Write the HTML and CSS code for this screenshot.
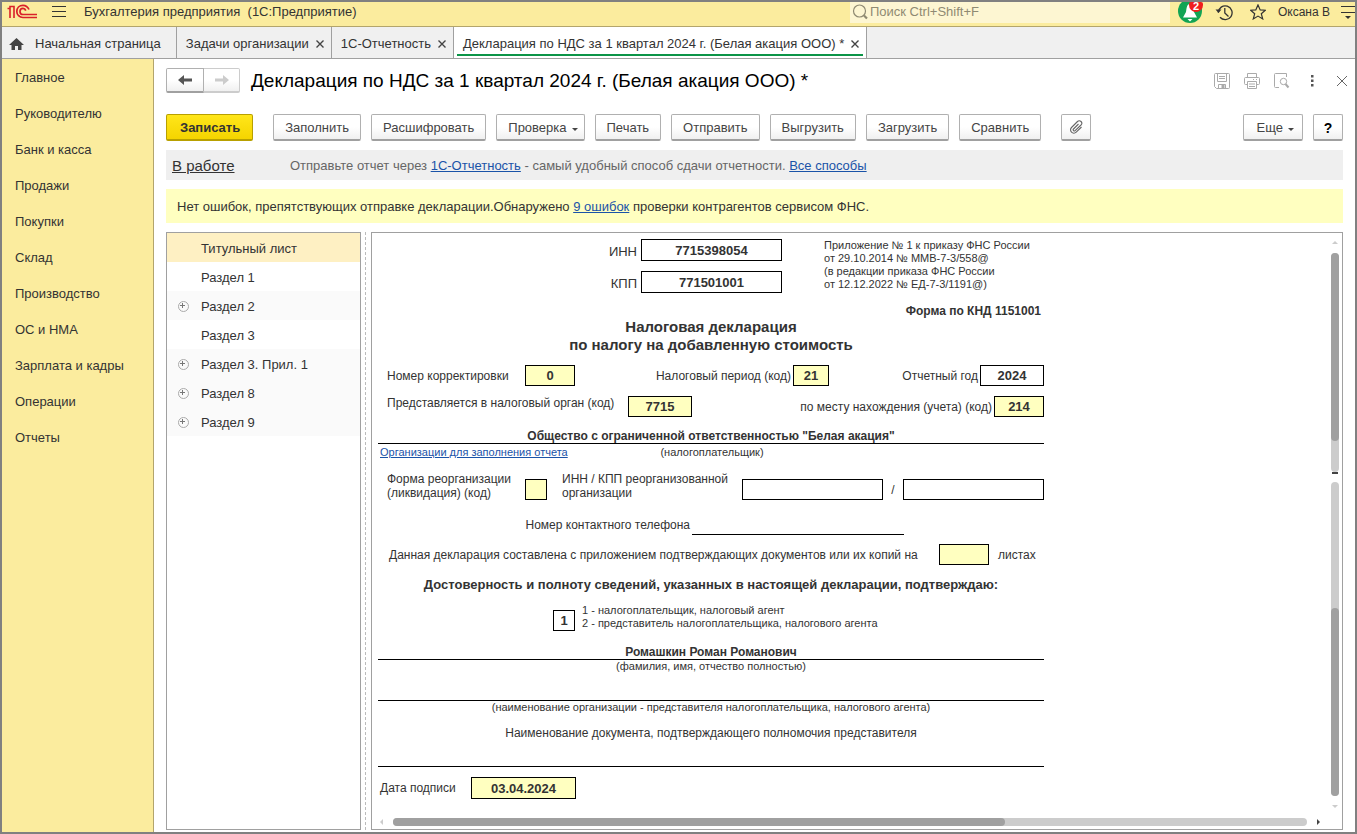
FILE: index.html
```html
<!DOCTYPE html>
<html lang="ru">
<head>
<meta charset="utf-8">
<title>Бухгалтерия предприятия</title>
<link rel="stylesheet" href="styles.css">
</head>
<body>
<div class="app">
  <header class="topbar">
    <svg class="logo" width="30" height="16" viewBox="0 0 30 16" aria-label="1C" fill="none" stroke="#d9202a"><path d="M0.500 4.500H3V14M3 4.500V2.500H7V14" stroke-width="1.600"/><path d="M22 5.500C20.800 2.800 18.600 1.300 16 1.300C12.300 1.300 9.800 4 9.800 7.400C9.800 10.800 12.500 13.500 16 13.500H30" stroke-width="1.700"/><path d="M18.800 6.600C18.300 5.200 17.300 4.400 16 4.400C14.200 4.400 13 5.700 13 7.400C13 9.200 14.300 10.500 16 10.500H30" stroke-width="1.700"/></svg>
    <button class="icon-btn burger" aria-label="Меню"><svg width="14" height="12" viewBox="0 0 14 12" stroke="#333" stroke-width="1"><path d="M0 .5h14M0 5.500h14M0 10.500h14"/></svg></button>
    <span class="app-name">Бухгалтерия предприятия&nbsp; (1С:Предприятие)</span>
    <label class="search"><svg width="17" height="17" viewBox="0 0 17 17" fill="none" stroke="#8f8a72"><circle cx="7.500" cy="7" r="6" stroke-width="1.200"/><path d="M12 11.500l3 3" stroke-width="2.200"/></svg><input type="text" placeholder="Поиск Ctrl+Shift+F" aria-label="Поиск"></label>
    <button class="icon-btn bell" aria-label="Уведомления"><svg width="28" height="22" viewBox="0 0 28 22"><circle cx="12" cy="9" r="12" fill="#12a454"/><path d="M12 2C8.500 2 8.500 7 8 10L5 15.500H19L16 10C15.500 7 15.500 2 12 2Z" fill="#fff"/><path d="M9.500 17H14.500L12 19.500Z" fill="#fff"/></svg><span class="badge">2</span></button>
    <button class="icon-btn" aria-label="История"><svg width="18" height="17" viewBox="0 0 18 17" fill="none" stroke="#333" stroke-width="1.300"><path d="M3.300 8.500A6.900 6.900 0 1 1 5 13.300M9.800 4v5l3.700 3.500"/><path d="M.5 5.500L3.500 9L6.500 5.500Z" fill="#333" stroke="none"/></svg></button>
    <button class="icon-btn" aria-label="Избранное"><svg width="16" height="16" viewBox="0 0 16 16" fill="none" stroke="#333" stroke-width="1.200"><path d="M8 .9L10.200 5.900L15.300 6.200L11.300 9.700L12.700 14.900L8 12.100L3.300 14.900L4.700 9.700L.7 6.200L5.800 5.900Z"/></svg></button>
    <span class="user">Оксана В</span>
    <button class="icon-btn" aria-label="Сервис"><svg width="14" height="13" viewBox="0 0 14 13"><path d="M0 .5h14M0 6.500h14" stroke="#333"/><path d="M4 10h6l-3 3z" fill="#333"/></svg></button>
  </header>

  <nav class="tabs">
    <a class="tab tab-home" href="#"><svg width="15" height="12" viewBox="0 0 15 12" fill="#444"><path d="M7.500 0L15 7H12.500V12H9V8H6V12H2.500V7H0Z"/></svg>Начальная страница</a>
    <div class="tab"><a href="#">Задачи организации</a><button class="close" aria-label="Закрыть"><svg width="8" height="8" viewBox="0 0 8 8" stroke="#444" stroke-width="1.400"><path d="M.5.5l7 7M7.500.5l-7 7"/></svg></button></div>
    <div class="tab"><a href="#">1С-Отчетность</a><button class="close" aria-label="Закрыть"><svg width="8" height="8" viewBox="0 0 8 8" stroke="#444" stroke-width="1.400"><path d="M.5.5l7 7M7.500.5l-7 7"/></svg></button></div>
    <div class="tab tab-active"><a href="#">Декларация по НДС за 1 квартал 2024 г. (Белая акация ООО) *</a><button class="close" aria-label="Закрыть"><svg width="8" height="8" viewBox="0 0 8 8" stroke="#444" stroke-width="1.400"><path d="M.5.5l7 7M7.500.5l-7 7"/></svg></button></div>
  </nav>

  <div class="body">
    <nav class="sections">
      <a href="#">Главное</a><a href="#">Руководителю</a><a href="#">Банк и касса</a><a href="#">Продажи</a><a href="#">Покупки</a><a href="#">Склад</a><a href="#">Производство</a><a href="#">ОС и НМА</a><a href="#">Зарплата и кадры</a><a href="#">Операции</a><a href="#">Отчеты</a>
    </nav>

    <main class="main">
      <div class="title-row">
        <div class="history">
          <button class="btn" aria-label="Назад"><svg width="14" height="10" viewBox="0 0 14 10" fill="#555"><path d="M0 5L6 0V3.500H14V6.500H6V10Z"/></svg></button>
          <button class="btn btn-off" aria-label="Вперед" disabled><svg width="14" height="10" viewBox="0 0 14 10" fill="#ccc"><path d="M14 5L8 0V3.500H0V6.500H8V10Z"/></svg></button>
        </div>
        <h1>Декларация по НДС за 1 квартал 2024 г. (Белая акация ООО) *</h1>
        <div class="tools">
          <button class="icon-btn" aria-label="Сохранить"><svg width="16" height="16" viewBox="0 0 16 16" fill="none" stroke="#aaa"><path d="M.5 1.500a1 1 0 0 1 1-1h13a1 1 0 0 1 1 1v13a1 1 0 0 1-1 1h-12l-2-2zM3.500.5v8h9v-8M5 3.500h6M5 5.500h6M4.500 15.500v-4h7v4"/><path d="M8 12h2v3h-2z" fill="#aaa"/></svg></button>
          <button class="icon-btn" aria-label="Печать"><svg width="16" height="16" viewBox="0 0 16 16" fill="none" stroke="#aaa"><path d="M3.500 4.500v-4h9v4M3.500 11.500h-2a1 1 0 0 1-1-1v-5a1 1 0 0 1 1-1h13a1 1 0 0 1 1 1v5a1 1 0 0 1-1 1h-2M3.500 8.500h9v7h-9zM5 11h6M5 13.500h6M9 6.500h1M12 6.500h1"/></svg></button>
          <button class="icon-btn" aria-label="Просмотр"><svg width="16" height="16" viewBox="0 0 16 16" fill="none" stroke="#aaa"><path d="M5 14.500H1.500a1 1 0 0 1-1-1v-12a1 1 0 0 1 1-1H12.500V4"/><circle cx="9.500" cy="8.500" r="3.200"/><path d="M11.500 11l3 3.500" stroke-width="2"/></svg></button>
          <button class="icon-btn" aria-label="Ещё"><svg width="16" height="12" viewBox="0 0 16 12" fill="#555"><path d="M7 0h2.500v2.500H7zM7 4.500h2.500v2.500H7zM7 9h2.500v2.500H7z"/></svg></button>
          <button class="icon-btn close-form" aria-label="Закрыть форму"><svg width="12" height="12" viewBox="0 0 12 12" stroke="#666"><path d="M1 1l10 10M11 1L1 11"/></svg></button>
        </div>
      </div>

      <div class="toolbar">
        <button class="btn btn-primary">Записать</button>
        <button class="btn">Заполнить</button>
        <button class="btn">Расшифровать</button>
        <button class="btn">Проверка<i class="caret"></i></button>
        <button class="btn">Печать</button>
        <button class="btn">Отправить</button>
        <button class="btn">Выгрузить</button>
        <button class="btn">Загрузить</button>
        <button class="btn">Сравнить</button>
        <button class="btn btn-clip" aria-label="Файлы"><svg width="14" height="14" viewBox="0 0 14 14" fill="none" stroke="#666" stroke-width="1.100"><path d="M9.500 4L4.500 9a1.100 1.100 0 0 0 1.600 1.600L12 5a2.400 2.400 0 0 0-3.500-3.500L2.500 7.500a3.300 3.300 0 0 0 4.700 4.700L12.500 7"/></svg></button>
        <button class="btn btn-more">Еще<i class="caret"></i></button>
        <button class="btn btn-help">?</button>
      </div>

      <div class="status">
        <a class="state" href="#">В работе</a>
        <p>Отправьте отчет через <a href="#">1С-Отчетность</a> - самый удобный способ сдачи отчетности. <a href="#">Все способы</a></p>
      </div>

      <div class="notice">Нет ошибок, препятствующих отправке декларации.Обнаружено <a href="#">9 ошибок</a> проверки контрагентов сервисом ФНС.</div>

      <div class="panes">
        <ul class="tree">
          <li class="selected">Титульный лист</li>
          <li>Раздел 1</li>
          <li class="alt expandable">Раздел 2</li>
          <li>Раздел 3</li>
          <li class="alt expandable">Раздел 3. Прил. 1</li>
          <li class="alt expandable">Раздел 8</li>
          <li class="alt expandable">Раздел 9</li>
        </ul>
        <div class="splitter"></div>
        <div class="sheet">
          <form class="decl">
            <div class="head">
              <label for="inn">ИНН</label><input id="inn" value="7715398054">
              <label for="kpp">КПП</label><input id="kpp" value="771501001">
              <p class="order">Приложение № 1 к приказу ФНС России<br>от 29.10.2014 № ММВ-7-3/558@<br>(в редакции приказа ФНС России<br>от 12.12.2022 № ЕД-7-3/1191@)</p>
            </div>
            <p class="knd">Форма по КНД 1151001</p>
            <h2>Налоговая декларация<br>по налогу на добавленную стоимость</h2>
            <div class="row row-period">
              <label for="corr">Номер корректировки</label><input class="req" id="corr" value="0">
              <label class="end" for="period">Налоговый период (код)</label><input class="req" id="period" value="21">
              <label class="end" for="year">Отчетный год</label><input id="year" value="2024">
            </div>
            <div class="row row-organ">
              <label class="raised" for="organ">Представляется в налоговый орган (код)</label><input class="req" id="organ" value="7715">
              <label class="end" for="place">по месту нахождения (учета) (код)</label><input class="req" id="place" value="214">
            </div>
            <p class="line company">Общество с ограниченной ответственностью "Белая акация"</p>
            <div class="under-company"><a href="#">Организации для заполнения отчета</a><span>(налогоплательщик)</span></div>
            <div class="row row-reorg">
              <label for="form">Форма реорганизации<br>(ликвидация) (код)</label><input class="req" id="form">
              <label class="reorg-label" for="rinn">ИНН / КПП реорганизованной<br>организации</label><input id="rinn">
              <span class="slash">/</span><input aria-label="КПП реорганизованной организации">
            </div>
            <div class="row row-phone"><label class="end" for="phone">Номер контактного телефона</label><input class="bare" id="phone"></div>
            <div class="row row-docs"><label for="docs">Данная декларация составлена с приложением подтверждающих документов или их копий на</label><input class="req" id="docs"><span>листах</span></div>
            <h3>Достоверность и полноту сведений, указанных в настоящей декларации, подтверждаю:</h3>
            <div class="signer"><input id="signer" value="1"><label for="signer">1 - налогоплательщик, налоговый агент<br>2 - представитель налогоплательщика, налогового агента</label></div>
            <p class="line name">Ромашкин Роман Романович</p>
            <p class="caption">(фамилия, имя, отчество полностью)</p>
            <p class="line blank"></p>
            <p class="caption">(наименование организации - представителя налогоплательщика, налогового агента)</p>
            <p class="line doc-name">Наименование документа, подтверждающего полномочия представителя</p>
            <div class="row row-date"><label for="date">Дата подписи</label><input class="req" id="date" value="03.04.2024"></div>
          </form>
          <div class="vbar">
            <i class="tri up"></i>
            <div class="track track-top"><div class="thumb"></div></div>
            <i class="tick"></i>
            <div class="track track-bottom"><div class="thumb"></div></div>
            <i class="tri down"></i>
          </div>
          <div class="hbar">
            <i class="tri left"></i>
            <div class="track"><div class="thumb"></div></div>
            <i class="tri right"></i>
          </div>
        </div>
      </div>
    </main>
  </div>
</div>
</body>
</html>
```
FILE: styles.css
```css
* { box-sizing: border-box; }
body {
  margin: 0;
  font: 13px/16px "Liberation Sans", Arial, sans-serif;
  color: #333;
}
h1, h2, h3, p, ul { margin: 0; padding: 0; }
a { color: #1a53a8; }
button, input { font: inherit; color: inherit; }
.app {
  display: flex;
  flex-direction: column;
  min-height: 100vh;
  border: 2px solid #808080;
  background: #fff;
}

.topbar {
  display: flex;
  align-items: center;
  height: 25px;
  padding: 0 0 4px 5px;
  background: #fbec9e;
  border-bottom: 1px solid #b3a56c;
}
.icon-btn {
  display: flex;
  padding: 0;
  border: 0;
  background: none;
}
.burger { margin: 0 18px 0 15px; }
.app-name { white-space: nowrap; }
.search {
  display: flex;
  align-items: center;
  width: 320px;
  height: 21px;
  margin: 0 8px 0 auto;
  padding-left: 2px;
  background: #fdf6d2;
}
.search input {
  flex: 1;
  min-width: 0;
  padding: 0 0 0 1px;
  border: 0;
  background: none;
}
.search input::placeholder { color: #8f8a72; opacity: 1; }
.bell { position: relative; align-self: flex-start; margin-right: 9px; }
.badge {
  position: absolute;
  top: 0;
  right: 3px;
  width: 14px;
  height: 10px;
  border-radius: 2px 2px 7px 7px;
  background: #f01e1e;
  color: #fff;
  font: bold 11px/8px "Liberation Sans", Arial, sans-serif;
  text-align: center;
}
.bell + .icon-btn { margin-right: 17px; }
.user { margin: 0 11px 0 12px; font-size: 12px; }

.tabs {
  display: flex;
  height: 32px;
  background: #f0f0f0;
  border-bottom: 1px solid #a0a0a0;
}
.tab {
  display: flex;
  align-items: center;
  gap: 7px;
  padding: 2px 7px 0 9px;
  border-right: 1px solid #a0a0a0;
  white-space: nowrap;
}
.tab, .tab a { color: #333; text-decoration: none; }
.tab-home { gap: 11px; padding: 2px 15px 0 7px; }
.tab-active { position: relative; background: #fff; }
.tab-active::after {
  content: "";
  position: absolute;
  left: 3px;
  right: 3px;
  bottom: 2px;
  height: 2px;
  background: #0b9447;
}
.close { display: flex; padding: 0; border: 0; background: none; }

.body { display: flex; flex: 1; }
.sections {
  flex: 0 0 152px;
  display: flex;
  flex-direction: column;
  background: #fbec9e;
  border-right: 1px solid #b3a56c;
}
.sections a {
  padding: 11px 12px 9px 13px;
  color: #333;
  text-decoration: none;
}
.main {
  flex: 1;
  min-width: 0;
  display: flex;
  flex-direction: column;
  padding: 9px 12px 2px;
}

.title-row { display: flex; align-items: center; height: 25px; }
.btn {
  display: flex;
  align-items: center;
  justify-content: center;
  height: 27px;
  padding: 2px 11px 0;
  border: 1px solid #b0b0b0;
  border-bottom: 2px solid #a0a0a0;
  border-radius: 2px;
  background: linear-gradient(#fff 50%, #f0f0f0);
  color: #444;
  white-space: nowrap;
}
.history { display: flex; }
.history .btn { width: 38px; height: 25px; padding: 0; border-radius: 2px 0 0 2px; }
.history .btn-off { width: 36px; border-left: 0; border-color: #ccc; border-radius: 0 2px 2px 0; }
h1 {
  margin-left: 11px;
  color: #000;
  font-size: 19px;
  font-weight: normal;
  line-height: 24px;
  white-space: nowrap;
}
.tools { display: flex; align-items: center; gap: 14px; margin: 0 -5px 0 auto; }
.close-form { margin-left: 2px; }

.toolbar { display: flex; gap: 10px; margin-top: 21px; }
.btn-primary {
  margin-right: 10px;
  padding: 2px 12px 0 13px;
  border-color: #b8a000;
  background: linear-gradient(#ffe61a, #f5d400);
  color: #333;
  font-weight: bold;
}
.caret {
  margin: 2px -5px 0 5px;
  border: 3px solid transparent;
  border-top-color: #444;
  border-bottom: 0;
}
.btn-clip { width: 30px; margin-left: 10px; padding: 0; }
.btn-more { margin-left: auto; padding: 2px 13px 0; }
.btn-help { width: 30px; padding: 2px 0 0; color: #000; font-size: 14px; font-weight: bold; }

.status {
  display: flex;
  align-items: center;
  height: 30px;
  margin-top: 9px;
  padding: 2px 6px 0;
  background: #efefef;
  color: #666;
}
.status .state { width: 118px; color: #333; font-size: 15px; }
.notice {
  margin-top: 9px;
  padding: 10px 11px 8px;
  background: #ffffc0;
}

.panes { flex: 1; display: flex; margin-top: 9px; }
.tree {
  flex: 0 0 195px;
  border: 1px solid #a0a0a0;
  list-style: none;
}
.tree li { position: relative; height: 29px; padding: 8px 8px 5px 34px; }
.tree .selected { background: #fef0c3; }
.tree .alt { background: #fafafa; }
.expandable::before, .expandable::after { content: ""; position: absolute; }
.expandable::before {
  left: 11px;
  top: 10px;
  width: 9px;
  height: 9px;
  border: 1px solid #aaa;
  border-radius: 50%;
}
.expandable::after {
  left: 13px;
  top: 12px;
  width: 5px;
  height: 5px;
  background: linear-gradient(#777, #777) center / 5px 1px no-repeat, linear-gradient(#777, #777) center / 1px 5px no-repeat;
}
.splitter { width: 5px; margin-right: 5px; border-right: 1px dashed #bbb; }
.sheet {
  flex: 1;
  min-width: 0;
  display: grid;
  grid-template: 1fr 13px / 1fr 12px;
  border: 1px solid #a0a0a0;
}

.decl { max-width: 672px; padding: 6px 0 0 6px; font-size: 12px; line-height: 14px; white-space: nowrap; }
.decl input {
  width: 100%;
  min-width: 0;
  height: 21px;
  padding: 0;
  border: 1px solid #000;
  border-radius: 0;
  background: #fff;
  font-size: 13px;
  font-weight: bold;
  text-align: center;
}
.decl .head input, .decl .row-date input { height: 22px; }
.decl input.req { background: #ffffc0; }
.decl input.bare { border-width: 0 0 1px; height: 20px; }
.row { display: grid; align-items: center; }
.row > label:first-child { padding-left: 9px; }
.end { padding-right: 2px; text-align: right; }
.head {
  display: grid;
  grid-template: 22px 22px / 259px 141px 1fr;
  align-items: center;
  gap: 10px 4px;
}
.head label { padding-top: 4px; font-size: 13px; text-align: right; }
.head .order {
  grid-area: 1 / 3 / 3 / 4;
  align-self: start;
  padding-left: 38px;
  font-size: 11px;
  line-height: 13px;
}
.knd { padding: 11px 3px 0 0; font-weight: bold; text-align: right; }
h2 { font-size: 15px; line-height: 18px; text-align: center; }
.row-period { grid-template-columns: 147px 50px 218px 36px 1fr 64px; margin-top: 11px; }
.row-organ { grid-template-columns: 250px 64px 1fr 50px; margin-top: 10px; }
.row label.raised { padding-bottom: 7px; }
.line { border-bottom: 1px solid #000; text-align: center; }
.company { margin-top: 12px; font-weight: bold; }
.under-company {
  display: grid;
  grid-template-columns: 1fr auto 1fr;
  padding: 1px 0 0 2px;
  font-size: 11px;
}
.row-reorg { grid-template-columns: 147px 22px 195px 141px 20px 141px; margin-top: 13px; }
.row-reorg input { align-self: end; }
.reorg-label { padding-left: 15px; }
.slash { padding-top: 8px; text-align: center; }
.row-phone { grid-template-columns: 314px 212px; margin-top: 15px; }
.row-docs { grid-template-columns: 561px 50px 1fr; margin-top: 9px; }
.row-docs > label:first-child { padding-left: 11px; }
.row-docs span { padding-left: 9px; }
h3 { margin-top: 12px; font-size: 13px; line-height: 16px; text-align: center; }
.signer {
  display: grid;
  grid-template-columns: 22px 1fr;
  gap: 7px;
  align-items: end;
  margin: 11px 0 0 175px;
  font-size: 11px;
  line-height: 13px;
}
.signer label { padding-bottom: 1px; }
.name { margin-top: 14px; font-weight: bold; }
.caption { font-size: 11px; line-height: 12px; text-align: center; }
.blank { height: 29px; }
.doc-name { padding: 13px 0 26px; }
.row-date { grid-template-columns: 93px 105px; margin-top: 10px; }
.row-date > label:first-child { padding-left: 2px; }

.vbar { display: flex; flex-direction: column; align-items: center; padding: 8px 3px 0 0; }
.track { border-radius: 4px; background: #ccc; }
.vbar .track { width: 8px; display: flex; flex-direction: column; }
.thumb { border-radius: 4px; background: #a0a0a0; }
.tri { border: 3px solid transparent; }
.up { border-top: 0; border-bottom-color: #ccc; }
.down { margin: 9px 0 8px; border-bottom: 0; border-top-color: #ccc; }
.track-top { flex: 218; margin-top: 9px; }
.track-top .thumb { height: 86%; }
.tick { width: 6px; height: 2px; margin-bottom: 8px; background: #444; }
.track-bottom { flex: 313; justify-content: flex-end; }
.track-bottom .thumb { height: 60%; }
.hbar { grid-column: 1 / 3; display: flex; align-items: center; padding: 0 22px 2px 8px; }
.hbar .track { flex: 1; margin: 0 10px; }
.hbar .thumb { width: 67%; height: 8px; }
.left { border-left: 0; border-right-color: #ccc; }
.right { border-right: 0; border-left-color: #444; }
```
